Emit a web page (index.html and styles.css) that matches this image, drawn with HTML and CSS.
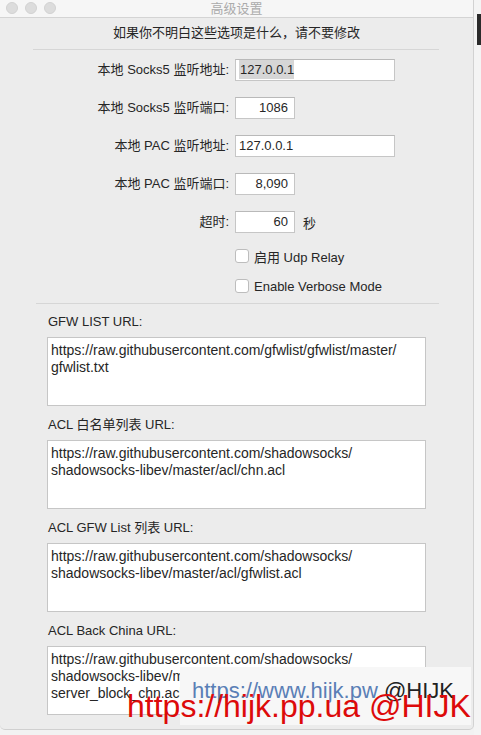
FILE: index.html
```html
<!DOCTYPE html>
<html lang="zh-CN">
<head>
  <meta charset="UTF-8" />
  <meta name="viewport" content="width=device-width, initial-scale=1.0"/>
  <title>高级设置</title>
  <link rel="stylesheet" href="styles.css">
</head>
<body>

  <div class="window">
    <div class="titlebar">
      <div class="lights">
        <span class="light"></span>
        <span class="light"></span>
        <span class="light"></span>
      </div>
      <div class="title">高级设置</div>
    </div>

    <div class="content">
      <div class="notice">如果你不明白这些选项是什么，请不要修改</div>
      <div class="divider"></div>

      <div class="form">
        <label class="label">本地 Socks5 监听地址:</label>
        <div class="field wide"><span class="sel">127.0.0.1</span></div>

        <label class="label">本地 Socks5 监听端口:</label>
        <div class="field num">1086</div>

        <label class="label">本地 PAC 监听地址:</label>
        <div class="field wide">127.0.0.1</div>

        <label class="label">本地 PAC 监听端口:</label>
        <div class="field num">8,090</div>

        <label class="label">超时:</label>
        <div class="inline">
          <div class="field num">60</div>
          <span class="unit">秒</span>
        </div>
      </div>

      <div class="checks">
        <div class="check"><span class="box"></span>启用 Udp Relay</div>
        <div class="check"><span class="box"></span>Enable Verbose Mode</div>
      </div>

      <div class="divider lower"></div>

      <div class="urls">
        <div class="url-label">GFW LIST URL:</div>
        <div class="area">https://raw.githubusercontent.com/gfwlist/gfwlist/master/<br>gfwlist.txt</div>

        <div class="url-label">ACL 白名单列表 URL:</div>
        <div class="area">https://raw.githubusercontent.com/shadowsocks/<br>shadowsocks-libev/master/acl/chn.acl</div>

        <div class="url-label">ACL GFW List 列表 URL:</div>
        <div class="area">https://raw.githubusercontent.com/shadowsocks/<br>shadowsocks-libev/master/acl/gfwlist.acl</div>

        <div class="url-label">ACL Back China URL:</div>
        <div class="area">https://raw.githubusercontent.com/shadowsocks/<br>shadowsocks-libev/master/acl/<br>server_block_chn.acl</div>
      </div>
    </div>
  </div>

  <div class="desk">
    <div class="desk-bar"></div>
  </div>

  <!-- watermarks laid over the bottom of the window -->
  <div class="stamp">
    <span class="stamp-link">https://www.hijk.pw</span> @HIJK
  </div>
  <div class="stamp-red">https://hijk.pp.ua @HIJK</div>

</body>
</html>
```

FILE: styles.css
```css
* { box-sizing: border-box; }
body {
  font-family: 'Liberation Sans', 'Noto Sans CJK SC', sans-serif;
  font-size: 13px;
  color: #262626;
  margin: 0;
  padding: 0;
  width: 481px;
  height: 735px;
  display: flex;
  background: #f2f2f2;
  position: relative;
  overflow: hidden;
}
.window {
  width: 474px;
  height: 730px;
  background: #ececec;
  border-right: 1px solid #d2d2d2;
  border-bottom: 1px solid #d0d0d0;
  border-radius: 0 0 5px 5px;
  display: flex;
  flex-direction: column;
}
.titlebar {
  height: 18px;
  background: #f6f6f6;
  border-bottom: 1px solid #d4d4d4;
  position: relative;
  display: flex;
  align-items: center;
  justify-content: center;
}
.lights {
  position: absolute;
  left: 6px;
  top: 2px;
  display: flex;
  gap: 7px;
}
.light {
  width: 12px;
  height: 12px;
  border-radius: 50%;
  background: #dcdcdc;
  border: 1px solid #d2d2d2;
}
.title {
  color: #ababab;
  font-size: 13px;
  line-height: 16px;
}
.content {
  padding-top: 7px;
}
.notice {
  text-align: center;
  line-height: 16px;
}
.divider {
  height: 1px;
  background: #d6d6d6;
  margin: 8px 34px 9px 33px;
}
.divider.lower {
  margin: 9px 34px 10px 36px;
}
.form {
  display: grid;
  grid-template-columns: 229px auto;
  column-gap: 6px;
  row-gap: 16px;
  align-items: center;
  justify-items: start;
}
.label {
  justify-self: end;
  line-height: 22px;
}
.field {
  height: 22px;
  background: white;
  border: 1px solid #c6c6c6;
  border-top-color: #b9b9b9;
  line-height: 20px;
  padding: 0 3px;
  white-space: nowrap;
}
.field.wide {
  width: 160px;
}
.field.num {
  width: 60px;
  text-align: right;
  padding-right: 6px;
}
.sel {
  background: #d6d6d6;
  padding: 2px 0 2px 1px;
}
.inline {
  display: flex;
  align-items: center;
  gap: 8px;
}
.checks {
  margin: 15px 0 0 235px;
  display: flex;
  flex-direction: column;
  gap: 14px;
}
.check {
  display: flex;
  align-items: center;
  gap: 5px;
  height: 16px;
}
.box {
  width: 14px;
  height: 14px;
  background: white;
  border: 1px solid #bdbdbd;
  border-radius: 3px;
}
.urls {
  padding-left: 47px;
  display: flex;
  flex-direction: column;
}
.url-label {
  line-height: 16px;
  padding-left: 1px;
  margin-bottom: 7px;
}
.area {
  width: 379px;
  height: 69px;
  background: white;
  border: 1px solid #c6c6c6;
  padding: 4px 3px;
  font-size: 14px;
  line-height: 17px;
  margin-bottom: 11px;
  white-space: nowrap;
  overflow: hidden;
}
.desk {
  flex: 1;
  background: #f4f4f4;
}
.desk-bar {
  margin: 14px 0 0 3px;
  height: 31px;
  background: #2b2b2b;
}
.stamp {
  position: absolute;
  left: 180px;
  top: 667px;
  width: 291px;
  height: 58px;
  background: #f7f7f7;
  padding: 13px 0 0 12px;
  font-size: 22px;
  line-height: 22px;
  color: #222;
  white-space: nowrap;
}
.stamp-link {
  color: #5a7fb6;
}
.stamp-red {
  position: absolute;
  left: 127px;
  top: 690px;
  font-size: 32px;
  line-height: 32px;
  color: #dd0a0a;
  white-space: nowrap;
}
```
